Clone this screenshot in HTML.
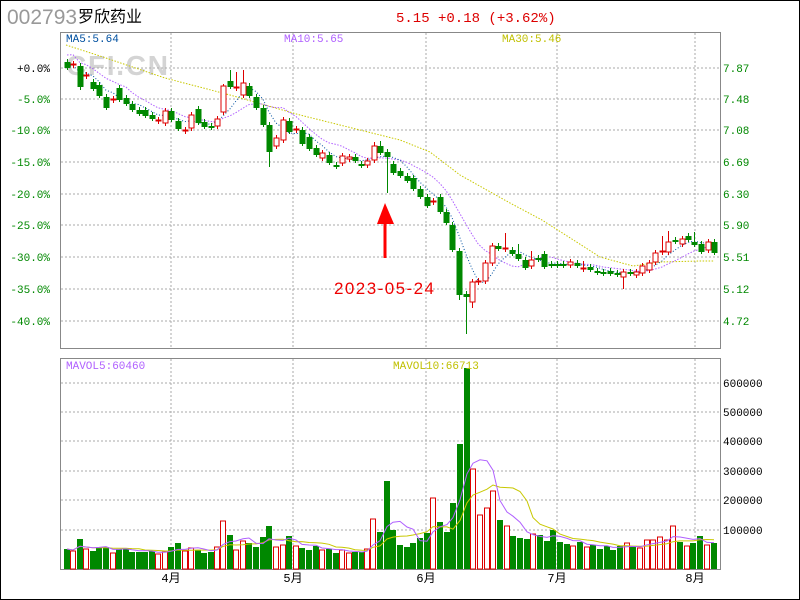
<!DOCTYPE html><html><head><meta charset="utf-8"><style>
body{margin:0;background:#fff;}
svg{display:block;font-family:"Liberation Mono","Noto Sans CJK SC",monospace;}
</style></head><body>
<svg id="s" width="800" height="600" xmlns="http://www.w3.org/2000/svg">
<rect x="0.5" y="0.5" width="799" height="599" fill="#fff" stroke="#000"/>
<text x="7" y="24" font-family="Liberation Sans,sans-serif" font-size="21" fill="#999">002793</text>
<text x="78" y="22" font-family="Liberation Sans,Noto Sans CJK SC,sans-serif" font-size="16" fill="#000">罗欣药业</text>
<text x="396" y="22" font-size="14" fill="#d00">5.15 +0.18 (+3.62%)</text>
<text x="66" y="75" font-family="Liberation Sans,sans-serif" font-weight="bold" font-size="28" textLength="102" fill="#d4d4d4">CFI.CN</text>
<rect x="60.5" y="32.5" width="660" height="316" fill="none" stroke="#888"/>
<rect x="60.5" y="358.5" width="660" height="211" fill="none" stroke="#888"/>
<g id="g"></g>
<text x="66" y="42" font-size="11" fill="#0050a0">MA5:5.64</text>
<text x="284" y="42" font-size="11" fill="#b060ff">MA10:5.65</text>
<text x="502" y="42" font-size="11" fill="#c0c000">MA30:5.46</text>
<text x="66" y="369" font-size="11" fill="#b060ff">MAVOL5:60460</text>
<text x="393" y="369" font-size="11" fill="#c0c000">MAVOL10:66713</text>
<path d="M385 258V218" stroke="#f00" stroke-width="3"/><path d="M377 224L385 203L394 224Z" fill="#f00"/>
<text x="334" y="294" font-family="Liberation Sans,sans-serif" font-size="17" textLength="100" fill="#e00">2023-05-24</text>
</svg>
<script>
var g=document.getElementById('g'),h='';
function L(s){h+=s;}
var gy=[68,99,130,162,194,225,257,289,321],pl=['+0.0%','-5.0%','-10.0%','-15.0%','-20.0%','-25.0%','-30.0%','-35.0%','-40.0%'],pr=['7.87','7.48','7.08','6.69','6.30','5.90','5.51','5.12','4.72'];
gy.forEach(function(y,i){L('<line x1="61" x2="720" y1="'+y+'" y2="'+y+'" stroke="#aaa" stroke-dasharray="2,2"/>');
L('<text x="50" y="'+(y+4)+'" font-size="11" text-anchor="end" fill="'+(i?'#080':'#000')+'">'+pl[i]+'</text>');
L('<text x="723" y="'+(y+4)+'" font-size="11" fill="#080">'+pr[i]+'</text>');});
[171,293,426,557,695].forEach(function(x,i){L('<line x1="'+x+'" x2="'+x+'" y1="33" y2="348" stroke="#aaa" stroke-dasharray="2,2"/><line x1="'+x+'" x2="'+x+'" y1="359" y2="569" stroke="#aaa" stroke-dasharray="2,2"/>');
L('<text x="'+x+'" y="582" font-size="12" text-anchor="middle" fill="#000">'+(i+4)+'月</text>');});
[383,412,441,471,500,530].forEach(function(y,i){L('<line x1="61" x2="720" y1="'+y+'" y2="'+y+'" stroke="#aaa" stroke-dasharray="2,2"/><text x="723" y="'+(y+4)+'" font-size="11" fill="#000">'+((6-i)*100000)+'</text>');});
var C="67,62,67,g;73,64,65,r;80,66,86,g;86,75,76,r;93,82,88,g;99,85,95,g;106,97,107,g;113,99,100,r;119,88,99,g;126,98,103,g;132,104,109,g;139,110,113,g;145,110,115,g;152,115,118,g;158,120,121,r;165,111,123,r;171,111,119,g;178,121,128,g;185,130,131,r;191,115,128,r;198,109,122,g;204,122,126,g;211,126,127,g;217,119,126,r;223,86,112,r;230,81,86,g;236,87,88,r;243,83,95,r;249,86,95,g;256,97,107,g;263,108,124,g;269,125,151,g;276,138,146,r;283,120,140,r;289,121,131,g;296,129,130,r;302,130,143,g;309,137,148,g;316,148,154,g;322,153,158,r;329,155,162,g;336,165,166,g;342,156,163,r;349,157,159,r;355,157,160,g;361,164,165,g;367,161,165,r;374,146,160,r;380,146,152,g;387,152,156,g;393,164,172,g;400,171,175,g;407,176,180,g;413,178,188,g;420,189,196,g;427,197,205,g;433,201,202,r;440,197,211,g;446,212,222,g;452,225,249,g;459,251,294,g;466,294,296,g;472,282,302,r;478,281,282,r;485,263,281,r;492,246,263,r;498,246,248,g;505,248,249,r;512,250,253,g;518,254,258,g;525,260,267,g;531,260,266,r;538,258,259,g;544,254,266,g;551,264,265,g;557,264,265,g;563,264,265,g;570,262,265,r;577,263,265,g;583,268,269,r;590,267,269,g;597,271,272,g;603,272,273,g;610,271,273,g;617,273,274,g;623,272,277,r;630,272,273,g;636,272,275,r;642,266,273,r;649,263,270,r;655,253,262,r;662,251,252,r;668,242,252,r;675,240,241,g;682,239,244,r;688,236,239,g;694,242,244,g;701,244,251,g;708,242,250,r;714,242,252,g";
var W={230:70,243:70,236:72,269:167,387:193,466:334,459:300,472:308,668:231,662:236,623:289,694:232,505:233,531:251,518:244,583:261,380:141,223:84,80:90,99:98,374:142};
var cd=C.split(';').map(function(s){var a=s.split(',');return {x:+a[0],t:+a[1],b:+a[2],r:a[3]=='r'};});
var cl=cd.map(function(d){return d.r?d.t:d.b;});
function ma(a,k){return a.map(function(_,i){var s=0,m=0;for(var j=Math.max(0,i-k+1);j<=i;j++){s+=a[j];m++;}return s/m;});}
function pth(xs,ys,col,da){var p='';ys.forEach(function(y,i){p+=(i?'L':'M')+xs[i]+' '+y.toFixed(1);});L('<path d="'+p+'" fill="none" stroke="'+col+'"'+(da?' stroke-dasharray="'+da+'"':'')+'/>');}
var xs=cd.map(function(d){return d.x;});
var m30p=[[66,45],[100,56],[165,78],[230,95],[300,115],[360,130],[400,140],[430,152],[460,175],[510,203],[542,220],[575,241],[600,257],[633,266],[660,262],[700,261],[714,261]];
var p30='';m30p.forEach(function(q,i){p30+=(i?'L':'M')+q[0]+' '+q[1];});
L('<path d="'+p30+'" fill="none" stroke="#c8c800" stroke-dasharray="1.5,1.5"/>');
var m10=ma(cl,10).map(function(y,i){return i<10?y-12+i*1.2:y;});
pth(xs,m10,'#b060ff','1.5,1.5');
pth(xs,ma(cl,5),'#0050a0','1,2');
cd.forEach(function(d){var x=d.x,col=d.r?'#d00':'#080';var hi=d.t-3,lo=d.b+3;if(W[x]){if(W[x]<d.t)hi=W[x];else lo=W[x];}
L('<line x1="'+(x+0.5)+'" x2="'+(x+0.5)+'" y1="'+hi+'" y2="'+lo+'" stroke="'+col+'"/>');
var bh=Math.max(d.b-d.t,1);
L(d.r?'<rect x="'+(x-2)+'" y="'+d.t+'" width="5" height="'+bh+'" fill="#fff" stroke="#d00"/>':'<rect x="'+(x-2.5)+'" y="'+d.t+'" width="6" height="'+(bh+1)+'" fill="#080"/>');});
var V="67,549,g;73,551,r;80,539,g;86,549,r;93,551,g;99,547,g;106,547,g;113,553,r;119,549,g;126,548,g;132,552,g;139,552,g;145,552,g;152,551,g;158,554,r;165,552,r;171,547,g;178,543,g;185,551,r;191,548,r;198,550,g;204,553,g;211,552,g;217,547,r;223,521,r;230,535,g;236,550,r;243,541,r;249,543,g;256,547,g;263,537,g;269,526,g;276,547,r;283,545,r;289,536,g;296,546,r;302,548,g;309,550,g;316,546,g;322,550,r;329,549,g;336,553,g;342,550,r;349,553,r;355,552,g;362,552,g;367,549,r;373,519,r;380,532,g;387,481,g;393,530,g;400,545,g;407,547,g;413,543,g;420,538,g;427,533,g;433,498,r;440,522,g;447,532,g;453,503,g;460,444,g;467,368,g;473,469,r;480,515,r;487,508,r;493,491,r;500,520,g;507,526,r;513,536,g;520,538,g;527,539,g;533,534,r;540,535,g;547,541,g;553,530,g;560,542,g;567,544,g;573,546,r;580,542,g;587,547,r;593,545,g;600,549,g;607,546,g;613,550,g;620,546,g;627,543,r;633,547,g;640,548,r;647,540,r;653,540,r;660,537,r;667,540,r;673,526,r;680,542,g;687,546,r;693,543,g;700,536,g;707,545,r;714,543,g";
var vd=V.split(';').map(function(s){var a=s.split(',');return {x:+a[0],t:+a[1],r:a[2]=='r'};});
vd.forEach(function(d){var x=d.x;L(d.r?'<rect x="'+(x-2.5)+'" y="'+d.t+'" width="5" height="'+(569-d.t)+'" fill="#fff" stroke="#d00"/>':'<rect x="'+(x-3)+'" y="'+d.t+'" width="6" height="'+(569-d.t)+'" fill="#080"/>');});
var vx=vd.map(function(d){return d.x;}),vy=vd.map(function(d){return d.t;});
pth(vx,ma(vy,10),'#c8c800');pth(vx,ma(vy,5),'#b060ff');
g.innerHTML=h;
</script>
</body></html>
